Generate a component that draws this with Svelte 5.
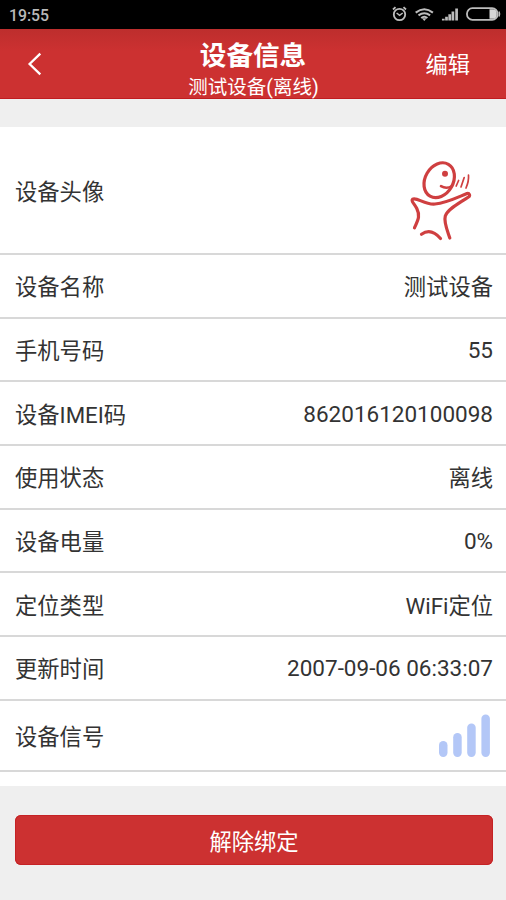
<script>
  const rows = [
    { label: '设备名称', value: '测试设备' },
    { label: '手机号码', value: '55', latin: true },
    { label: '设备IMEI码', value: '862016120100098', latin: true },
    { label: '使用状态', value: '离线' },
    { label: '设备电量', value: '0%', latin: true },
    { label: '定位类型', value: 'WiFi定位' },
    { label: '更新时间', value: '2007-09-06 06:33:07', latin: true }
  ];
</script>

<div class="screen">
  <div class="status">
    <span class="clock">19:55</span>
    <svg width="112" height="20" viewBox="0 0 112 20" fill="none" stroke="#bdbdbd">
      <circle cx="8.5" cy="10.5" r="5.7" stroke-width="1.8" />
      <path d="M2 5.5L4.5 3.2M15 5.5L12.5 3.2" stroke-width="1.8" />
      <path d="M5.6 9L8.6 11.3L11.7 9" stroke-width="1.5" />
      <path d="M24.7 8.6Q33.3 1.8 41.9 8.6M27.5 11.4Q33.3 7 39.1 11.4M30.2 14Q33.3 11.4 36.4 14" stroke-width="2" />
      <path d="M31 14.2H35.6L33.3 17Z" fill="#bdbdbd" stroke="none" />
      <path d="M52.3 16.5V14.7M55.5 16.5V12.7M58.7 16.5V10.2M61.9 16.5V7.5M65.6 16.5V4.5" stroke-width="2.7" />
      <rect x="76" y="4.2" width="30.6" height="11.6" rx="5.4" stroke-width="1.8" />
      <path d="M98.5 5.2H102Q105.8 5.2 105.8 10T102 14.8H98.5Z" fill="#d6d6d6" stroke="none" />
      <path d="M108 7.5Q109.2 10 108 12.5" stroke-width="1.5" />
    </svg>
  </div>

  <header>
    <button class="back" aria-label="返回">
      <svg width="16" height="24" viewBox="0 0 16 24" fill="none" stroke="#fff" stroke-width="2.3">
        <path d="M13.3 1.6L2.6 12L13.3 22.4" />
      </svg>
    </button>
    <div class="heading">
      <h1>设备信息</h1>
      <p>测试设备(离线)</p>
    </div>
    <button class="edit">编辑</button>
  </header>

  <main>
    <div class="row avatar">
      <span class="text">设备头像</span>
      <svg width="80" height="90" viewBox="0 0 80 90" fill="none" stroke="#cf3f40" stroke-width="3.2" stroke-linecap="round" stroke-linejoin="round">
        <ellipse cx="39.2" cy="25.2" rx="14" ry="18.4" transform="rotate(30 39.2 25.2)" />
        <circle cx="45" cy="18.8" r="3" fill="#cf3f40" stroke="none" />
        <path d="M41 31.2Q46.5 34.5 52 31" stroke-width="2.6" />
        <path d="M56.2 31L58.6 25.5M61 32L64.2 22.5M66 33Q69 26 68.5 20.2" stroke-width="1.7" />
        <path d="M14.5 72.8C18 65 20.5 61 16.8 53.5C14 48 10.5 46 12.6 44.2C17 42 25 50 35 49C46 48 56 43 67 38.5C69.5 38 70.5 40.5 68.5 42C59 48.5 47.5 54 45.3 61C43.5 67 47.5 76 49.8 83" />
        <path d="M21.5 79.2C28 74.5 34.5 76.5 40.5 83.5" />
      </svg>
    </div>

    {#each rows as row}
      <div class="row">
        <span class="text">{row.label}</span>
        <span class={row.latin ? 'latin' : 'text'}>{row.value}</span>
      </div>
    {/each}

    <div class="row signal">
      <span class="text">设备信号</span>
      <svg width="54" height="46" viewBox="0 0 54 46" fill="#b3c7f7">
        <rect x="0" y="28" width="8.5" height="16" rx="4.2" />
        <rect x="14.2" y="20" width="8.5" height="24" rx="4.2" />
        <rect x="28.2" y="10.5" width="8.5" height="33.5" rx="4.2" />
        <rect x="42.4" y="1.5" width="8.5" height="42.5" rx="4.2" />
      </svg>
    </div>
  </main>

  <div class="footer">
    <button class="unbind">解除绑定</button>
  </div>
</div>

<style>
  .screen {
    width: 506px;
    height: 900px;
    overflow: hidden;
    display: flex;
    flex-direction: column;
    background: #efefef;
    font-family: Roboto, "Noto Sans CJK SC", sans-serif;
    font-size: 22.3px;
    color: #333;
  }
  button {
    border: 0;
    padding: 0;
    background: none;
    color: #fff;
    font: inherit;
  }
  svg {
    display: block;
  }
  .status {
    flex: none;
    height: 29px;
    box-sizing: border-box;
    padding: 4px 3px 0 9px;
    display: flex;
    justify-content: space-between;
    background: #000;
  }
  .clock {
    font-size: 15.8px;
    line-height: 23px;
    font-weight: 500;
    color: #b9b9b9;
  }
  header {
    flex: none;
    height: 70px;
    box-sizing: border-box;
    border-bottom: 1px solid #c01c20;
    display: grid;
    grid-template-columns: 120px 1fr 120px;
    background: linear-gradient(#bd2e2d, #cc3131 22px);
    color: #fff;
  }
  .back {
    justify-self: start;
    align-self: start;
    margin: 23px 0 0 27px;
  }
  .heading {
    text-align: center;
  }
  h1 {
    margin: 10px 0 0;
    font-size: 26.6px;
    line-height: 34px;
    font-weight: 700;
  }
  p {
    margin: 2px -1px 0 0;
    font-size: 19.5px;
    line-height: 26px;
  }
  .edit {
    justify-self: end;
    align-self: start;
    margin: 20px 36px 0 0;
    line-height: 32px;
  }
  main {
    flex: none;
    height: 659px;
    margin-top: 28px;
    background: #fff;
  }
  .row {
    height: 63.7px;
    box-sizing: border-box;
    border-bottom: 2px solid #d8d8d8;
    padding: 0 13px 0 15px;
    display: flex;
    align-items: center;
    justify-content: space-between;
  }
  .text {
    padding-bottom: 1px;
  }
  .latin {
    padding-top: 1px;
    font-size: 22.5px;
  }
  .avatar {
    height: 128px;
    padding-right: 26px;
  }
  .avatar svg {
    margin-top: 19px;
  }
  .signal {
    height: 71.5px;
  }
  .footer {
    padding: 29px 13px 0 15px;
  }
  .unbind {
    width: 100%;
    height: 50px;
    padding-bottom: 1px;
    border-radius: 6px;
    box-shadow: inset 0 0 0 1px #c52225;
    background: #cc3131;
  }
</style>
